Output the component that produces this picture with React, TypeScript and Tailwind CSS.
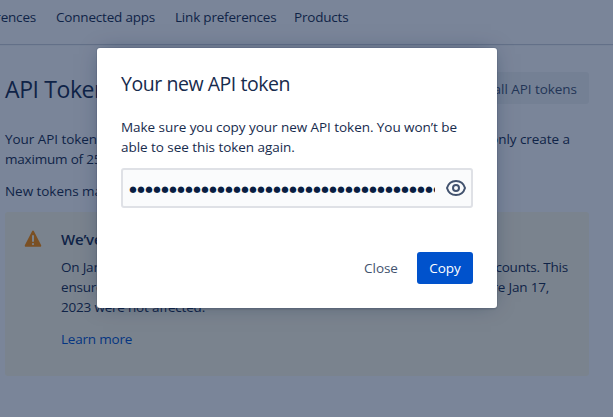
import type { ReactNode } from 'react';

function SplitLine({ left, right }: { left: string; right: string }) {
  return (
    <div className="flex justify-between whitespace-nowrap">
      <span>{left}</span>
      <span>{right}</span>
    </div>
  );
}

function WarningIcon() {
  return (
    <svg width="24" height="24" viewBox="0 0 24 24" className="shrink-0">
      <path
        fill="#ff8b00"
        fillRule="evenodd"
        d="M12.938 4.200c-.518-.978-1.36-.974-1.876 0L3.938 18.025c-.518.978-.045 1.771 1.057 1.771h14.01c1.102 0 1.573-.797 1.057-1.771L12.938 4.200zM12 15a1 1 0 0 0 1-1V9a1 1 0 0 0-2 0v5a1 1 0 0 0 1 1zm0 3.2a1.1 1.1 0 1 0 0-2.2 1.1 1.1 0 0 0 0 2.2z"
      />
    </svg>
  );
}

function EyeIcon() {
  return (
    <svg width="24" height="24" viewBox="0 0 24 24" className="block shrink-0" fill="none" stroke="#42526e" strokeWidth="2">
      <path d="M3 12c1.200-4 4.700-7 9-7s7.800 3 9 7c-1.200 4-4.700 7-9 7s-7.800-3-9-7z" />
      <circle cx="12" cy="12" r="3" />
    </svg>
  );
}

function Page() {
  return (
    <div className="h-full bg-white">
      <header className="flex h-11 items-start gap-5 whitespace-nowrap pt-[7px] leading-5 tracking-[-0.2px] shadow-[0_1px_1px_rgba(9,30,66,0.2)]">
        <span className="flex w-9 justify-end">Preferences</span>
        <span className="w-[99px]">Connected apps</span>
        <span className="w-[99px]">Link preferences</span>
        <span>Products</span>
      </header>
      <main className="w-[589px] pl-[5px] pt-7">
        <div className="flex h-8 items-center justify-between">
          <h1 className="pt-0.5 text-[23px] tracking-[-0.4px]">API Tokens</h1>
          <span className="rounded-[3px] bg-[#091e42]/5 px-3 pb-[5px] pt-[7px] leading-5 text-[#42526e]">Revoke all API tokens</span>
        </div>
        <div className="pr-[19px] pt-[25px] leading-5">
          <SplitLine left="Your API tokens" right="only create a" />
          <p className="tracking-[-0.2px]">maximum of 25 tokens</p>
        </div>
        <p className="pt-3 leading-5">New tokens may</p>
        <section className="mt-[11px] flex h-[164px] rounded-[3px] bg-[#fffae6] pl-4 pt-[15px]">
          <WarningIcon />
          <div className="w-[523px] pl-4 leading-5 tracking-[-0.2px]">
            <h2 className="pt-0.5 text-[15px] font-semibold leading-5">We’ve</h2>
            <div className="pt-2">
              <SplitLine left="On Jan" right="accounts. This" />
              <div className="pr-[19px]">
                <SplitLine left="ensure" right="before Jan 17," />
              </div>
              <p>2023 were not affected.</p>
            </div>
            <p className="pt-3 text-[#0052cc]">Learn more</p>
          </div>
        </section>
      </main>
    </div>
  );
}

function Button({ primary, children }: { primary?: boolean; children: ReactNode }) {
  return (
    <button
      className={
        primary
          ? 'h-8 w-14 rounded-[3px] bg-[#0052cc] text-white'
          : 'h-8 w-14 rounded-[3px] text-[#42526e]'
      }
    >
      {children}
    </button>
  );
}

function TokenDialog() {
  return (
    <div className="h-[260px] w-[400px] rounded-[3px] bg-white px-6 pt-6 shadow-[0_0_0_1px_rgba(9,30,66,0.08),0_2px_1px_rgba(9,30,66,0.08),0_0_20px_-6px_rgba(9,30,66,0.5)]">
      <h2 className="text-[19.5px] leading-6 tracking-[-0.45px]">Your new API token</h2>
      <p className="whitespace-nowrap pt-[21px] leading-5">
        Make sure you copy your new API token. You won’t be
        <br />
        able to see this token again.
      </p>
      <div className="mt-[11px] flex h-10 items-center rounded-[3px] border-2 border-[#dfe1e6] bg-[#fafbfc] pl-1.5 pr-[3px]">
        <span className="flex w-[306px] overflow-hidden pt-px font-['DejaVu_Sans',sans-serif] text-[8.5px] leading-5 tracking-normal text-[#091e42]">
          {Array.from({ length: 39 }, (_, i) => (
            <span key={i} className="flex w-2 shrink-0 justify-center">
              ●
            </span>
          ))}
        </span>
        <span className="ml-auto">
          <EyeIcon />
        </span>
      </div>
      <div className="flex justify-end gap-2 pt-11">
        <Button>Close</Button>
        <Button primary>Copy</Button>
      </div>
    </div>
  );
}

export default function App() {
  return (
    <div className="relative h-[417px] w-[613px] overflow-hidden font-['Open_Sans',sans-serif] text-[13.5px] tracking-[-0.05px] text-[#172b4d]">
      <Page />
      <div className="absolute inset-0 flex items-start bg-[#091e42]/54 pl-[97px] pt-12">
        <TokenDialog />
      </div>
    </div>
  );
}
